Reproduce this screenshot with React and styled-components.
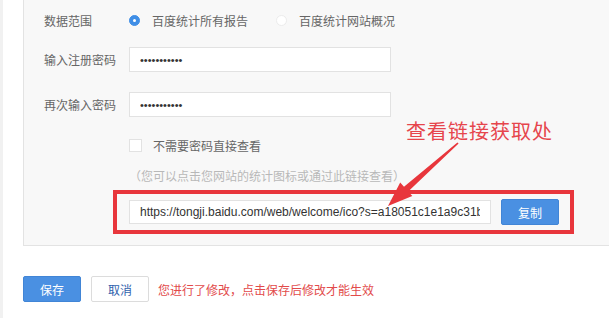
import React from "react";
import styled, { createGlobalStyle } from "styled-components";

const Global = createGlobalStyle`
  html, body { margin: 0; padding: 0; background: #fff; }
  body {
    font-family: "Liberation Sans", "Noto Sans CJK SC", sans-serif;
    font-size: 12px;
    color: #666;
  }
`;

const Page = styled.div`
  position: relative;
  width: 609px;
  height: 318px;
  overflow: hidden;
  border-left: 3px solid #f1f1f1;
  padding-left: 20px;
  box-sizing: border-box;
`;

const Panel = styled.div`
  width: 640px;
  background: #f8f8f8;
  border-left: 1px solid #e3e3e3;
  border-bottom: 1px solid #e3e3e3;
  padding: 8px 0 11px 20px;
  box-sizing: border-box;
  display: flex;
  flex-direction: column;
`;

const Row = styled.div`
  display: flex;
  align-items: center;
  height: ${(p) => p.$h || 25}px;
  margin-top: ${(p) => p.$mt || 0}px;
`;

const Label = styled.div`
  width: 85px;
  flex: none;
  color: #666;
  font-size: 12px;
`;

const Radio = styled.span`
  width: 11px;
  height: 11px;
  border-radius: 50%;
  box-sizing: border-box;
  flex: none;
  margin-right: 12px;
  background: ${(p) => (p.$on ? "#3f8ee6" : "#fff")};
  border: 1px solid ${(p) => (p.$on ? "#3f8ee6" : "#ececec")};
  display: flex;
  align-items: center;
  justify-content: center;
  &::after {
    content: "";
    width: 3px;
    height: 3px;
    border-radius: 50%;
    background: ${(p) => (p.$on ? "#fff" : "transparent")};
  }
`;

const OptionText = styled.span`
  color: #666;
  margin-right: ${(p) => p.$mr || 0}px;
`;

const Input = styled.input`
  box-sizing: border-box;
  width: ${(p) => p.$w || 262}px;
  height: ${(p) => p.$h || 25}px;
  border: 1px solid #e2e2e2;
  background: #fff;
  padding: 0 10px;
  font-family: "Liberation Sans", "Noto Sans CJK SC", sans-serif;
  font-size: ${(p) => p.$fs || 12}px;
  color: #333;
  outline: none;
  margin: 0;
`;

const Checkbox = styled.span`
  width: 13px;
  height: 13px;
  box-sizing: border-box;
  border: 1px solid #e2e2e2;
  background: #fff;
  margin-left: 85px;
  margin-right: 11px;
  flex: none;
`;

const Hint = styled.div`
  margin-left: 85px;
  margin-top: 11px;
  height: 16px;
  line-height: 16px;
  color: #b8b8b8;
  font-size: 12px;
`;

const LinkBox = styled.div`
  margin-top: 5px;
  margin-left: 69px;
  width: 461px;
  height: 44px;
  box-sizing: border-box;
  border: 4px solid #e8363c;
  padding: 0 11px 0 12px;
  display: flex;
  align-items: center;
  justify-content: space-between;
`;

const Button = styled.button`
  box-sizing: border-box;
  width: ${(p) => p.$w || 58}px;
  height: ${(p) => p.$h || 26}px;
  border-radius: 2px;
  font-family: "Liberation Sans", "Noto Sans CJK SC", sans-serif;
  font-size: 12px;
  cursor: pointer;
  padding: 0;
  background: ${(p) => (p.$primary ? "#4a90e2" : "#fff")};
  color: ${(p) => (p.$primary ? "#fff" : "#2f62ad")};
  border: 1px solid ${(p) => (p.$primary ? "#4185d6" : "#dcdcdc")};
`;

const Footer = styled.div`
  display: flex;
  align-items: center;
  margin-top: 30px;
  gap: 10px;
`;

const Message = styled.span`
  color: #e24b4b;
  font-size: 12px;
  margin-left: -1px;
`;

const Annotation = styled.div`
  position: absolute;
  left: 403px;
  top: 118px;
  font-family: "Noto Sans CJK SC", sans-serif;
  font-size: 20px;
  line-height: 26px;
  color: #e6454c;
  letter-spacing: 1px;
`;

const ArrowSvg = styled.svg`
  position: absolute;
  left: 0;
  top: 0;
  pointer-events: none;
`;

export default function App() {
  return (
    <>
      <Global />
      <Page>
        <Panel>
          <Row $h={24}>
            <Label>数据范围</Label>
            <Radio $on />
            <OptionText $mr={28}>百度统计所有报告</OptionText>
            <Radio />
            <OptionText>百度统计网站概况</OptionText>
          </Row>
          <Row $mt={15}>
            <Label>输入注册密码</Label>
            <Input type="password" defaultValue="12345678901" readOnly $fs={11} />
          </Row>
          <Row $mt={20}>
            <Label>再次输入密码</Label>
            <Input type="password" defaultValue="12345678901" readOnly $fs={11} />
          </Row>
          <Row $mt={16}>
            <Checkbox />
            <OptionText>不需要密码直接查看</OptionText>
          </Row>
          <Hint>（您可以点击您网站的统计图标或通过此链接查看）</Hint>
          <LinkBox>
            <Input
              $w={362}
              $h={24}
              readOnly
              defaultValue="https://tongji.baidu.com/web/welcome/ico?s=a18051c1e1a9c31b0e2a4"
            />
            <Button $primary $w={58} $h={26}>复制</Button>
          </LinkBox>
        </Panel>
        <Footer>
          <Button $primary>保存</Button>
          <Button>取消</Button>
          <Message>您进行了修改，点击保存后修改才能生效</Message>
        </Footer>
        <Annotation>查看链接获取处</Annotation>
        <ArrowSvg width="609" height="318" viewBox="0 0 609 318">
          <polygon
            transform="translate(-3,0)"
            points="458.6,143.6 408.2,191.4 412.3,196.1 388,206 400.2,182.6 404.0,186.8 457.4,142.4"
            fill="#e8363c"
          />
        </ArrowSvg>
      </Page>
    </>
  );
}
